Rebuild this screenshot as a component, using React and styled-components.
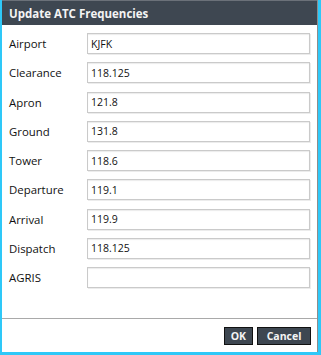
import React from "react";
import styled, { createGlobalStyle } from "styled-components";

const Global = createGlobalStyle`
  html, body { margin: 0; padding: 0; }
  body {
    width: 321px;
    height: 355px;
    background: #2ec8f8;
    font-family: "Open Sans", "Noto Sans", sans-serif;
    overflow: hidden;
  }
`;

const Frame = styled.div`
  padding: 0 3px 3px 2px;
  height: 355px;
  box-sizing: border-box;
  display: flex;
`;

const Dialog = styled.div`
  flex: 1;
  background: #fff;
  border-right: 1px solid #8d8d8d;
  display: flex;
  flex-direction: column;
`;

const Header = styled.div`
  height: 25px;
  background: #3e4751;
  border-top: 1px solid #6b7179;
  box-sizing: border-box;
  display: flex;
  align-items: center;
  padding: 0 7px;
  color: #f4f4f4;
  font-weight: 700;
  font-size: 11.5px;
`;

const Form = styled.div`
  flex: 1;
  display: grid;
  grid-template-columns: 78px 1fr;
  row-gap: 8.25px;
  align-content: start;
  padding: 8px 7px 0 7px;
`;

const Label = styled.label`
  height: 21px;
  display: flex;
  align-items: center;
  font-size: 11.4px;
  color: #111;
`;

const Input = styled.input`
  height: 21px;
  box-sizing: border-box;
  border: 1px solid #cacaca;
  box-shadow: inset 0 1px 1px rgba(0, 0, 0, 0.08), 1px 1px 0 #ececec;
  padding: 0 3px;
  font-family: "Open Sans", "Noto Sans", sans-serif;
  font-size: 10.5px;
  color: #111;
  outline: none;
  background: #fff;
`;

const Footer = styled.div`
  border-top: 1px solid #a9a9a9;
  height: 34px;
  box-sizing: border-box;
  display: flex;
  justify-content: flex-end;
  align-items: flex-start;
  gap: 4px;
  padding: 8px 6px 0 0;
`;

const Button = styled.button`
  height: 18px;
  min-width: ${(p) => p.$w}px;
  box-sizing: border-box;
  background: #3e4751;
  border: 1px solid #111;
  color: #f4f4f4;
  font-family: "Open Sans", "Noto Sans", sans-serif;
  font-weight: 700;
  font-size: 10.5px;
  padding: 0 6px;
  line-height: 16px;
  cursor: pointer;
`;

const fields = [
  ["Airport", "KJFK"],
  ["Clearance", "118.125"],
  ["Apron", "121.8"],
  ["Ground", "131.8"],
  ["Tower", "118.6"],
  ["Departure", "119.1"],
  ["Arrival", "119.9"],
  ["Dispatch", "118.125"],
  ["AGRIS", ""],
];

export default function App() {
  return (
    <>
      <Global />
      <Frame>
        <Dialog>
          <Header>Update ATC Frequencies</Header>
          <Form>
            {fields.map(([l, v]) => (
              <React.Fragment key={l}>
                <Label>{l}</Label>
                <Input defaultValue={v} />
              </React.Fragment>
            ))}
          </Form>
          <Footer>
            <Button $w={24}>OK</Button>
            <Button $w={54}>Cancel</Button>
          </Footer>
        </Dialog>
      </Frame>
    </>
  );
}
